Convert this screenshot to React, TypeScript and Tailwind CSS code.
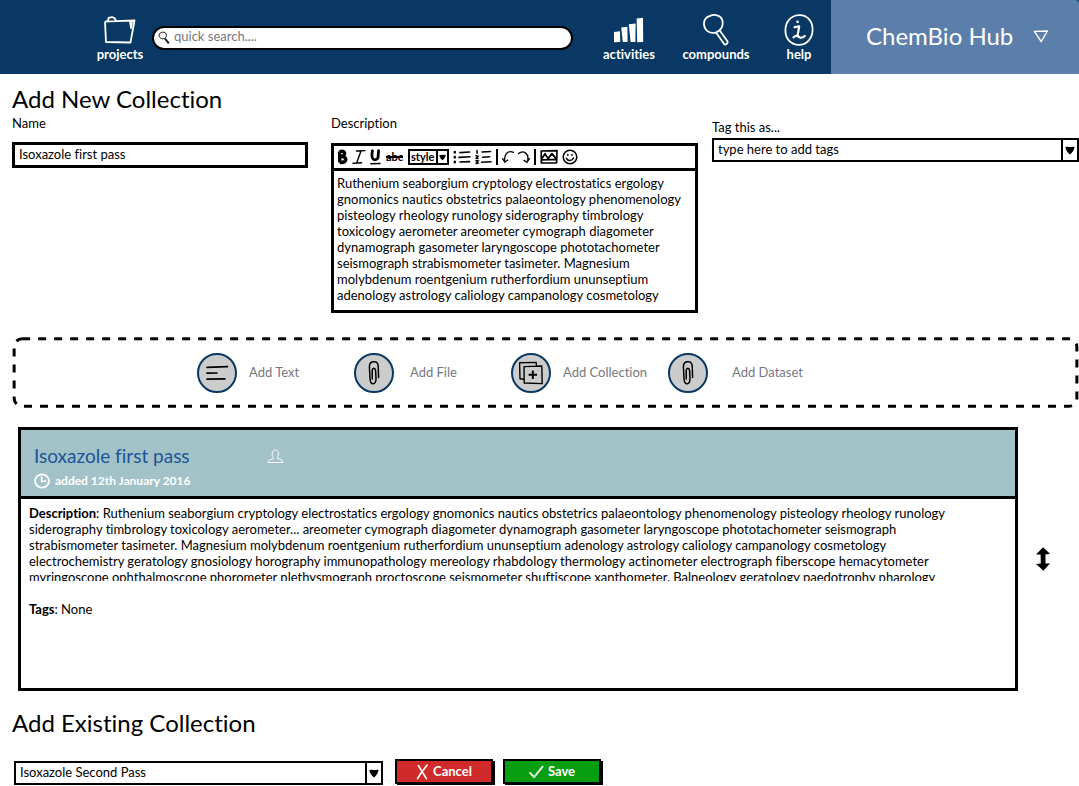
import type { ReactNode } from "react";

const editorText = [
  "Ruthenium seaborgium cryptology electrostatics ergology",
  "gnomonics nautics obstetrics palaeontology phenomenology",
  "pisteology rheology runology siderography timbrology",
  "toxicology aerometer areometer cymograph diagometer",
  "dynamograph gasometer laryngoscope phototachometer",
  "seismograph strabismometer tasimeter. Magnesium",
  "molybdenum roentgenium rutherfordium ununseptium",
  "adenology astrology caliology campanology cosmetology",
].join("\n");

const summaryLines = [
  "siderography timbrology toxicology aerometer... areometer cymograph diagometer dynamograph gasometer laryngoscope phototachometer seismograph",
  "strabismometer tasimeter. Magnesium molybdenum roentgenium rutherfordium ununseptium adenology astrology caliology campanology cosmetology",
  "electrochemistry geratology gnosiology horography immunopathology mereology rhabdology thermology actinometer electrograph fiberscope hemacytometer",
  "myringoscope ophthalmoscope phorometer plethysmograph proctoscope seismometer shuftiscope xanthometer. Balneology geratology paedotrophy pharology",
];

function FolderIcon() {
  return (
    <svg width="34" height="28" viewBox="0 0 34 28" fill="none" stroke="white" strokeWidth="1.8" strokeLinejoin="round">
      <path d="M2 5.5 3 26 27.5 26.5 31.5 4.5 13 5.2 2 5.5M5 5 5.5 1.8 9 1.2 11.5 2 13 5M27 5.2 28 12 29 5" />
    </svg>
  );
}

function BarsIcon() {
  return (
    <svg width="32" height="26" viewBox="0 0 32 26" fill="white">
      <path d="M1 15 7 14.2 7.2 25 1 25.3ZM8.2 10.6 14.4 9.8 14.6 25 9.8 25ZM15.8 7.2 22.6 6.4 22.4 25 17.6 25ZM23.6 1.5 30 .8 30.2 25 24.2 25.3Z" />
    </svg>
  );
}

function MagnifierIcon() {
  return (
    <svg width="28" height="32" viewBox="0 0 28 32" fill="none" stroke="white" strokeWidth="1.8" strokeLinejoin="round">
      <path d="M8 1.8C13-.3 19.5 1.5 20.5 7 21.5 12.5 18.5 17 13.5 18.6 7 20 2.5 16 2 10.5 1.8 6.5 4 3 8 1.8ZM14 18.6 21.8 29.6C23.4 31.6 26.4 29.6 25.4 27.2L17.6 16.2" />
    </svg>
  );
}

function HelpIcon() {
  return (
    <svg width="30" height="32" viewBox="0 0 30 32" fill="none" stroke="white" strokeWidth="1.8" strokeLinecap="round" strokeLinejoin="round">
      <path d="M15 1.2C23.5.8 28.6 7.5 28.6 15.5 28.6 24.5 22.5 30.8 15 30.8 7 30.8 1.4 25 1.4 16.5 1.4 8 6.5 1.6 15 1.2Z" />
      <path d="M10.6 13.2 15.2 12.4 13.6 21.6M9.5 23.4C12 20.2 14 22.4 15.5 23.2 17.5 24.2 19.5 23.2 20.8 22" strokeWidth="2.2" />
      <circle cx="13.6" cy="7.8" r="1.4" fill="white" stroke="none" />
    </svg>
  );
}

function SearchGlyph() {
  return (
    <svg className="shrink-0" width="12" height="14" viewBox="0 0 12 14" fill="none" stroke="#222222" strokeWidth="1">
      <path d="M4.4 1.2C7 .8 8.6 2.2 8.4 4.6 8.2 7 6.4 8 4.2 7.8 2 7.4.9 5.8 1.1 4 1.3 2.4 2.6 1.5 4.4 1.2Z" />
      <path d="M7 7.6 10.8 12.4" strokeWidth="2" />
    </svg>
  );
}

function TextLinesIcon() {
  return (
    <svg width="24" height="18" viewBox="0 0 24 18" fill="none" stroke="black" strokeWidth="1.7" strokeLinecap="round">
      <path d="M2 3.4 22.5 2.6M2 9.2 12 9M2 15.2 20 14.8" />
    </svg>
  );
}

function ClipIcon() {
  return (
    <svg width="12" height="26" viewBox="0 0 12 26" fill="none" stroke="black" strokeWidth="1.5" strokeLinecap="round">
      <path d="M10.6 17.5 10.2 6C9.8 1.8 7.4 1.4 5 1.8 2.4 2.2 1.4 4 1.4 7L2 18.5C2.2 22.5 3.6 24 5.2 23.8 7.2 23.6 8 21.4 8 18.5L7.6 10.6C7.2 7.6 4.6 7.4 4.2 10.4L4.2 19" />
    </svg>
  );
}

function CopyPlusIcon() {
  return (
    <svg width="26" height="24" viewBox="0 0 26 24" fill="none" stroke="black" strokeWidth="1.4" strokeLinejoin="round">
      <path d="M5.6 18.2 2 17.8 1.6 1.8 18.2 1.4 18.4 4.6M6 5.6 23.8 5 24.2 22.6 6.2 22Z" />
      <path d="M14.8 9.6V18M10.6 13.8H19" strokeWidth="1.9" />
    </svg>
  );
}

function PersonIcon() {
  return (
    <svg width="17" height="15" viewBox="0 0 17 15" fill="none" stroke="white" strokeWidth="1">
      <path d="M6.2 8.4C4.6 6 4.4 1.2 8.4 1 12.2 1 12 6 10.4 8.4L10.6 9.8C13 10.2 15.8 11 16 13.4L1 13.6C1 11.2 3.6 10.4 6 9.8Z" />
    </svg>
  );
}

function ClockIcon() {
  return (
    <svg width="16" height="16" viewBox="0 0 16 16" fill="none" stroke="white" strokeWidth="1.9">
      <ellipse cx="8" cy="8" rx="7" ry="6.6" />
      <path d="M7.6 3.2V8.4L12.4 8" strokeWidth="1.5" />
    </svg>
  );
}

function ArrowGlyph() {
  return (
    <svg width="10" height="9" viewBox="0 0 10 9" fill="black">
      <path d="M.4 1.2C2 .2 3.8.9 5 1 6.4.8 8.4.2 9.6 1.2 9.2 4 7 6.5 5.2 8.6 3 6.8.8 4.4.4 1.2Z" />
    </svg>
  );
}

function Picker({ id, value, className }: { id: string; value: string; className: string }) {
  return (
    <div className={`relative flex h-6 border-2 border-black bg-white ${className}`}>
      <select id={id} aria-label={value} className="w-full appearance-none bg-transparent pr-5 pl-1 text-[13px] outline-none">
        <option>{value}</option>
      </select>
      <span className="pointer-events-none absolute inset-y-0 right-0 flex w-4 items-center justify-center border-l-2 border-black">
        <ArrowGlyph />
      </span>
    </div>
  );
}

function NavItem({ label, children, className }: { label: string; children: ReactNode; className: string }) {
  return (
    <a href="#" className={`flex h-12 flex-col items-center justify-between text-[13px] leading-4 font-bold text-white ${className}`}>
      <span className="flex flex-1 items-center">{children}</span>
      {label}
    </a>
  );
}

function AddButton({ label, children, gap }: { label: string; children: ReactNode; gap: string }) {
  return (
    <button type="button" className={`flex w-[157px] items-center text-[13px] whitespace-nowrap text-[#77777f] ${gap}`}>
      <span className="flex size-10 shrink-0 items-center justify-center rounded-full border-2 border-[#083863] bg-[#cccccc]">
        {children}
      </span>
      {label}
    </button>
  );
}

function Tool({ label, children }: { label: string; children: ReactNode }) {
  return (
    <button type="button" aria-label={label} className="flex shrink-0 items-center">
      {children}
    </button>
  );
}

function Toolbar() {
  return (
    <div className="flex h-[25px] items-center gap-1 border-b-3 border-black pl-[3px]">
      <Tool label="Bold">
        <svg width="11" height="16" viewBox="0 0 11 16" fill="none" stroke="black" strokeWidth="3.4" strokeLinejoin="round">
          <path d="M2.6 2.4 2.8 13.4M2.6 2.6C6.6 1.6 8 3 7.6 5 7.2 6.8 5 7.2 3 7.4 7 7.2 9 8.6 8.8 10.6 8.4 13 5.4 13.6 2.8 13.4" />
        </svg>
      </Tool>
      <Tool label="Italic">
        <svg width="14" height="16" viewBox="0 0 14 16" fill="none" stroke="black" strokeWidth="1.4" strokeLinecap="round">
          <path d="M4.5 2 13 1.6M9 2 4.6 14M1 14.2 9.6 13.8" />
        </svg>
      </Tool>
      <Tool label="Underline">
        <svg width="11" height="16" viewBox="0 0 11 16" fill="none" stroke="black" strokeLinecap="round">
          <path d="M2.4 1.8C1.8 5 1.8 9 3.2 10.2 5 11.4 7.4 10.4 8 8.6L8.6 1.6" strokeWidth="2.8" />
          <path d="M.8 14.8 10 14.4" strokeWidth="1.5" />
        </svg>
      </Tool>
      <Tool label="Strikethrough">
        <span className="w-[19px] text-center text-[11px] leading-4 font-bold line-through decoration-2">abc</span>
      </Tool>
      <div className="relative flex h-4 w-[41px] shrink-0 border-2 border-black">
        <select aria-label="style" className="w-full appearance-none bg-transparent pl-px text-[11px] leading-3 font-bold outline-none">
          <option>style</option>
        </select>
        <span className="pointer-events-none absolute inset-y-0 right-0 flex w-[11px] items-center justify-center border-l-2 border-black">
          <svg width="7" height="7" viewBox="0 0 10 9" fill="black">
            <path d="M.4 1.6C2-.2 3.8.6 5 1 6.4.4 8.4 0 9.6 1.4 9.4 4 7 6.5 5.2 8.6 3 6.8.8 4.4.4 1.6Z" />
          </svg>
        </span>
      </div>
      <Tool label="Bulleted list">
        <svg width="18" height="16" viewBox="0 0 18 16" fill="none" stroke="black" strokeWidth="1.6" strokeLinecap="round">
          <path d="M7 3.6 16.6 3M6 8.4 17 7.8M7 13 16.6 12.6" />
          <path d="M1.8 3V3.4M1.8 8V8.4M1.8 12.8V13.2" strokeWidth="2.4" />
        </svg>
      </Tool>
      <Tool label="Numbered list">
        <svg width="17" height="16" viewBox="0 0 17 16" fill="none" stroke="black" strokeWidth="1.5" strokeLinecap="round">
          <path d="M7 3 15.6 2.6M7.6 8.2 14.6 7.8M6.6 13.2 16 12.8" />
          <path d="M2 1.4V4.2M1 6.8 3 7.2 1.4 9.2 3 9.4M1 11.6 3 12 1.6 13 3 14 1.2 14.6" />
        </svg>
      </Tool>
      <span className="h-4 w-0.5 shrink-0 bg-black" />
      <Tool label="Undo">
        <svg width="12" height="16" viewBox="0 0 12 16" fill="none" stroke="black" strokeWidth="1.3" strokeLinecap="round">
          <path d="M11.4 3.4C7 1 2.4 4 2.6 11.8M.6 9.6 2.8 13 5.8 11" />
        </svg>
      </Tool>
      <Tool label="Redo">
        <svg width="12" height="16" viewBox="0 0 12 16" fill="none" stroke="black" strokeWidth="1.3" strokeLinecap="round">
          <path d="M.6 4.6C5 .8 11.4 4 9.6 11.8M6 11.4 9 13.4 11.4 9.6" />
        </svg>
      </Tool>
      <span className="h-4 w-0.5 shrink-0 bg-black" />
      <Tool label="Image">
        <svg width="18" height="16" viewBox="0 0 18 16" fill="none" stroke="black" strokeWidth="1.7" strokeLinejoin="round">
          <path d="M1.2 2 17 1.6 16.6 13.8 1.4 14ZM2 9.6 5 4.6 8 9.6 12 4.6 16 9.6M2 10.8 16 10.4" />
        </svg>
      </Tool>
      <Tool label="Emoticon">
        <svg width="16" height="16" viewBox="0 0 16 16" fill="none" stroke="black" strokeWidth="1.5" strokeLinecap="round">
          <circle cx="8" cy="8" r="6.8" />
          <path d="M5.8 5.4V6.2M10 5.4V6.2M4.4 9.4C6 12.4 10 12.2 11.6 9" />
        </svg>
      </Tool>
    </div>
  );
}

export default function App() {
  return (
    <div className="bg-white font-['Lato',sans-serif] text-[13px] text-black [font-variant-ligatures:none]">
      <header className="flex h-[74px] bg-[#083863]">
        <nav className="flex flex-1 items-start pt-[14px] pl-24">
          <NavItem label="projects" className="w-12">
            <FolderIcon />
          </NavItem>
          <label className="mt-3 ml-2 flex h-6 flex-1 items-center gap-1 rounded-full border-2 border-black bg-white pl-1">
            <SearchGlyph />
            <input type="search" aria-label="quick search" placeholder="quick search...." className="w-full bg-transparent pb-0.5 text-[13px] outline-none placeholder:text-[#77777f]" />
          </label>
          <NavItem label="activities" className="ml-7 w-14">
            <BarsIcon />
          </NavItem>
          <NavItem label="compounds" className="ml-6 w-[70px]">
            <MagnifierIcon />
          </NavItem>
          <NavItem label="help" className="mr-4 ml-8 w-8">
            <HelpIcon />
          </NavItem>
        </nav>
        <button type="button" className="flex w-[248px] items-center justify-between rounded-tr-sm bg-[#5b7eab] pr-[30px] pb-0.5 pl-[35px] text-2xl text-white">
          ChemBio Hub
          <svg width="16" height="14" viewBox="0 0 16 14" fill="none" stroke="white" strokeWidth="1.4" strokeLinejoin="round">
            <path d="M1.4 2.4 14.4 2 8.2 12.6Z" />
          </svg>
        </button>
      </header>

      <main>
        <h1 className="pt-[11px] pl-3 text-2xl leading-7">Add New Collection</h1>
        <form className="grid grid-cols-[319fr_381fr_367fr] pl-3">
          <div className="pr-[23px]">
            <label htmlFor="name" className="block h-[29px] leading-5">Name</label>
            <input id="name" defaultValue="Isoxazole first pass" className="h-[26px] w-full border-3 border-black px-1 pb-[3px] text-[13px] outline-none" />
          </div>
          <div className="pr-[14px]">
            <label htmlFor="description" className="block h-[30px] leading-5">Description</label>
            <div className="border-3 border-black">
              <Toolbar />
              <textarea id="description" defaultValue={editorText} className="block h-[139px] w-full resize-none overflow-hidden pt-1 pl-[3px] text-[13px] leading-4 whitespace-pre outline-none" />
            </div>
          </div>
          <div className="pt-1">
            <label htmlFor="tags" className="block h-[21px] leading-5">Tag this as...</label>
            <Picker id="tags" value="type here to add tags" className="w-full" />
          </div>
        </form>

        <section className="relative mt-6 ml-3 flex h-[71px] items-center pl-[185px]">
          <svg className="pointer-events-none absolute inset-0 h-full w-full" fill="none" stroke="black" strokeWidth="3" aria-hidden="true">
            <rect x="0.2%" y="2.5%" width="99.6%" height="95%" rx="8" strokeDasharray="8 8" />
          </svg>
          <AddButton label="Add Text" gap="gap-3">
            <TextLinesIcon />
          </AddButton>
          <AddButton label="Add File" gap="gap-4">
            <ClipIcon />
          </AddButton>
          <AddButton label="Add Collection" gap="gap-3">
            <CopyPlusIcon />
          </AddButton>
          <AddButton label="Add Dataset" gap="gap-6">
            <ClipIcon />
          </AddButton>
        </section>

        <div className="mt-[19px] flex items-center pl-[18px]">
          <article className="h-[264px] min-w-0 flex-1 border-3 border-black">
            <header className="h-[69px] border-b-3 border-black bg-[#a2c2c8] pt-3.5 pl-[13px]">
              <div className="flex h-6 items-center">
                <h2 className="w-[233px] text-[19px] text-[#1b5599]">Isoxazole first pass</h2>
                <PersonIcon />
              </div>
              <p className="flex h-[26px] items-center gap-[5px] text-[12px] font-bold text-white">
                <ClockIcon />
                added 12th January 2016
              </p>
            </header>
            <div className="px-2 pt-[6px] leading-4">
              <p className="h-[76px] overflow-hidden whitespace-nowrap">
                <b>Description</b>: Ruthenium seaborgium cryptology electrostatics ergology gnomonics nautics obstetrics palaeontology phenomenology pisteology rheology runology
                {summaryLines.map((line) => (
                  <span key={line} className="block">{line}</span>
                ))}
              </p>
              <p className="mt-5">
                <b>Tags</b>: None
              </p>
            </div>
          </article>
          <button type="button" aria-label="Reorder" className="mr-7 ml-[17px]">
            <svg width="16" height="24" viewBox="0 0 16 24" fill="black">
              <path d="M8 .2 15 6.8 10.4 7.6 10.6 16.4 15 16.4 8.4 23.8 1 17 5.8 16.6 5.6 7.6 1 7.4Z" />
            </svg>
          </button>
        </div>

        <h2 className="mt-[18px] pl-3 text-2xl leading-7">Add Existing Collection</h2>
        <div className="mt-[22px] flex items-start pl-3.5">
          <Picker id="existing" value="Isoxazole Second Pass" className="mt-0.5 w-[369px]" />
          <button type="button" className="ml-3 flex h-[25px] w-[98px] items-center justify-center gap-1 border-2 border-black bg-[#d02a2a] font-bold text-white shadow-[2px_2px_0_black]">
            <svg width="13" height="16" viewBox="0 0 13 16" fill="none" stroke="white" strokeWidth="1.7" strokeLinecap="round">
              <path d="M2.4 1.6 10.4 14.6M11 1.2C7.6 5.4 3.6 10.6 1.6 14.6" />
            </svg>
            Cancel
          </button>
          <button type="button" className="ml-2.5 flex h-[25px] w-[98px] items-center justify-center gap-1 border-2 border-black bg-[#089e12] font-bold text-white shadow-[2px_2px_0_black]">
            <svg width="15" height="14" viewBox="0 0 15 14" fill="none" stroke="white" strokeWidth="1.8" strokeLinecap="round" strokeLinejoin="round">
              <path d="M1.2 8 5 12.2 13.6 1.6" />
            </svg>
            Save
          </button>
        </div>
      </main>
    </div>
  );
}
